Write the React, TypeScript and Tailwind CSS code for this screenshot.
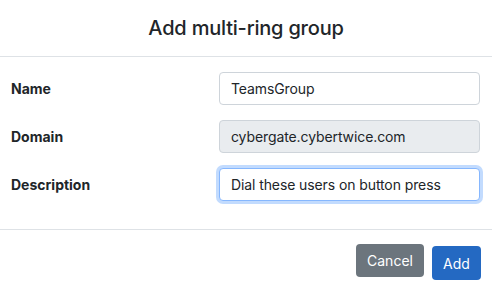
import React from 'react';

const rows = [
  { label: 'Name', value: 'TeamsGroup', kind: 'normal' },
  { label: 'Domain', value: 'cybergate.cybertwice.com', kind: 'disabled' },
  { label: 'Description', value: 'Dial these users on button press', kind: 'focus' },
];

export default function App() {
  return (
    <div className="flex h-[289px] w-[492px] flex-col bg-white font-['Inter',sans-serif] text-[#212529]">
      <header className="flex h-[58px] items-center justify-center border-b border-[#dee2e6]">
        <h2 className="text-[20px] font-medium tracking-[-0.2px]">Add multi-ring group</h2>
      </header>
      <main className="flex flex-col gap-[15px] pt-[15px] pr-[12px] pl-[11px]">
        {rows.map((row) => (
          <div key={row.label} className="flex items-center justify-between">
            <label className="text-[14px] font-bold">{row.label}</label>
            <div
              className={
                'flex h-[33px] w-[261px] items-center rounded-[4px] border px-[11px] text-[14px] tracking-[-0.1px] ' +
                (row.kind === 'disabled'
                  ? 'border-[#ced4da] bg-[#e9ecef]'
                  : row.kind === 'focus'
                    ? 'border-[#86b7fe] bg-white shadow-[0_0_0_3px_rgba(13,110,253,0.25)]'
                    : 'border-[#ced4da] bg-white')
              }
            >
              {row.value}
            </div>
          </div>
        ))}
      </main>
      <footer className="mt-[28px] flex h-[60px] items-start justify-end gap-[8px] border-t border-[#dee2e6] pt-[14px] pr-[11px]">
        <button className="h-[33px] w-[68px] rounded-[4px] bg-[#6c757d] text-[14px] text-white">
          Cancel
        </button>
        <button className="mt-[2px] h-[34px] w-[49px] rounded-[4px] bg-[#2469c2] text-[14px] text-white">
          Add
        </button>
      </footer>
    </div>
  );
}
